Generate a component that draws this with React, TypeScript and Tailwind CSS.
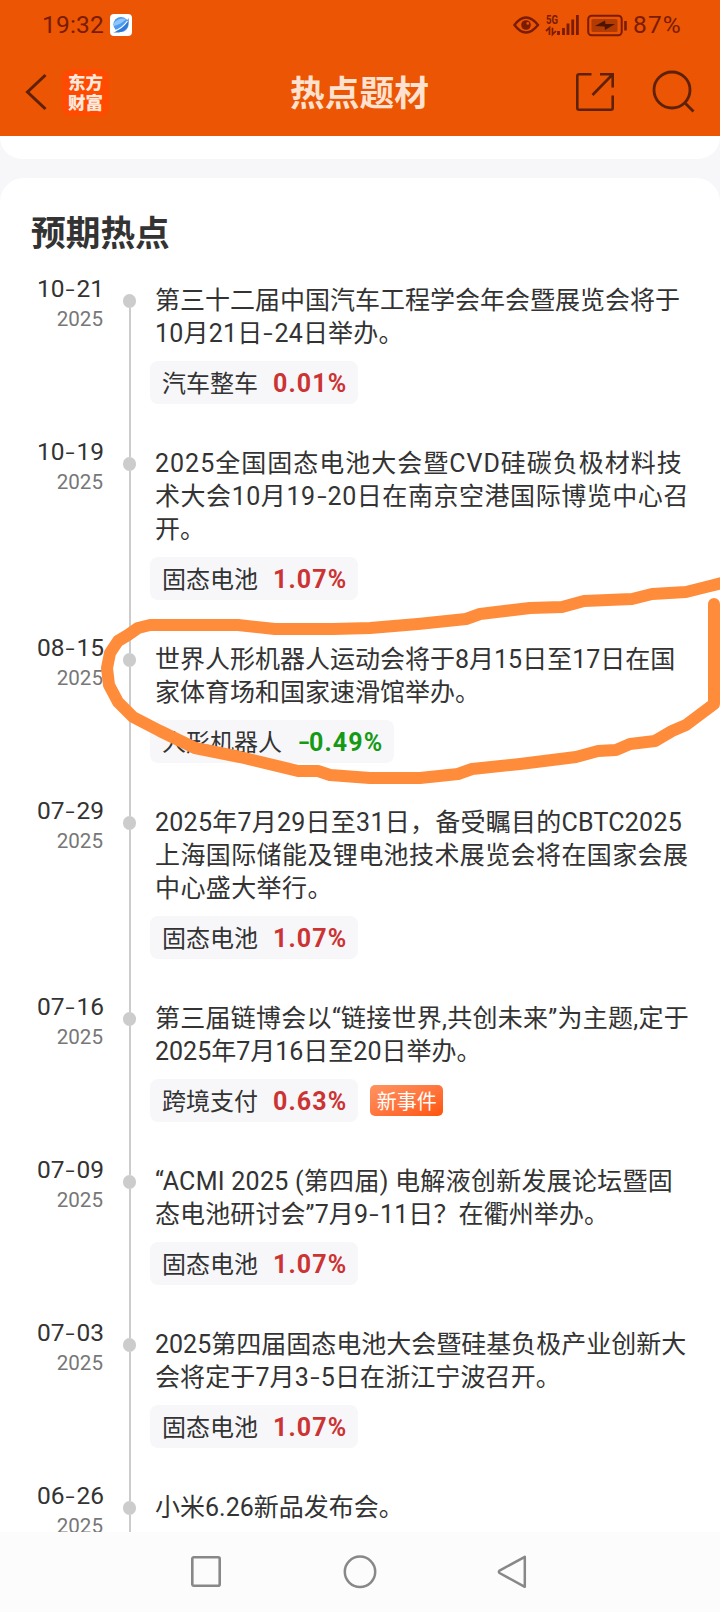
import React from "react";

type Line = { text: string; spacing?: string };
type Item = {
  date: string;
  year: string;
  lines: Line[];
  tag?: string;
  change?: string;
  fresh?: boolean;
};

const items: Item[] = [
  {
    date: "10-21",
    year: "2025",
    lines: [{ text: "第三十二届中国汽车工程学会年会暨展览会将于" }, { text: "10月21日-24日举办。", spacing: "tracking-[0.2px]" }],
    tag: "汽车整车",
    change: "0.01%",
  },
  {
    date: "10-19",
    year: "2025",
    lines: [
      { text: "2025全国固态电池大会暨CVD硅碳负极材料技", spacing: "tracking-[1px]" },
      { text: "术大会10月19-20日在南京空港国际博览中心召", spacing: "tracking-[0.55px]" },
      { text: "开。" },
    ],
    tag: "固态电池",
    change: "1.07%",
  },
  {
    date: "08-15",
    year: "2025",
    lines: [{ text: "世界人形机器人运动会将于8月15日至17日在国" }, { text: "家体育场和国家速滑馆举办。" }],
    tag: "人形机器人",
    change: "-0.49%",
  },
  {
    date: "07-29",
    year: "2025",
    lines: [
      { text: "2025年7月29日至31日，备受瞩目的CBTC2025", spacing: "tracking-[0.25px]" },
      { text: "上海国际储能及锂电池技术展览会将在国家会展", spacing: "tracking-[0.4px]" },
      { text: "中心盛大举行。", spacing: "tracking-[0.4px]" },
    ],
    tag: "固态电池",
    change: "1.07%",
  },
  {
    date: "07-16",
    year: "2025",
    lines: [
      { text: "第三届链博会以“链接世界,共创未来”为主题,定于", spacing: "tracking-[0.27px]" },
      { text: "2025年7月16日至20日举办。" },
    ],
    tag: "跨境支付",
    change: "0.63%",
    fresh: true,
  },
  {
    date: "07-09",
    year: "2025",
    lines: [
      { text: "“ACMI 2025 (第四届) 电解液创新发展论坛暨固", spacing: "tracking-[0.27px]" },
      { text: "态电池研讨会”7月9-11日？在衢州举办。", spacing: "tracking-[0.1px]" },
    ],
    tag: "固态电池",
    change: "1.07%",
  },
  {
    date: "07-03",
    year: "2025",
    lines: [{ text: "2025第四届固态电池大会暨硅基负极产业创新大" }, { text: "会将定于7月3-5日在浙江宁波召开。", spacing: "tracking-[0.1px]" }],
    tag: "固态电池",
    change: "1.07%",
  },
  { date: "06-26", year: "2025", lines: [{ text: "小米6.26新品发布会。" }] },
];

/** Text whose hyphens are drawn as wide dashes. */
function Dashed({ text }: { text: string }) {
  return (
    <>
      {text.split("-").map((part, i) => (
        <React.Fragment key={i}>
          {i > 0 && <span className="mx-[2px] inline-block w-[8px] scale-x-[1.35] scale-y-[0.85] text-center tracking-normal">-</span>}
          {part}
        </React.Fragment>
      ))}
    </>
  );
}

function StatusBar() {
  return (
    <div className="flex h-[50px] shrink-0 items-center pl-[42px] pr-[38px] text-[24.5px] leading-none text-[#7a1c02]">
      <span className="tracking-[0.2px]">19:32</span>
      <svg className="ml-[6px]" width="22" height="22" viewBox="0 0 22 22">
        <rect width="22" height="22" rx="4" fill="#fff" />
        <circle cx="11" cy="10.5" r="7.6" fill="#4c9bee" />
        <path d="M4 9Q9 3 16 5Q12 10 4 12Z" fill="#8ec6fb" />
        <path d="M3.5 18.5Q14 15.5 18.5 4Q20 16 9 18.5Z" fill="#2f78d8" />
        <path d="M3 17.5Q12 15 17.5 7" fill="none" stroke="#fff" strokeWidth="1.2" />
      </svg>
      <div className="grow" />
      <svg width="116" height="24" viewBox="0 0 116 24" fill="none">
        <path d="M1.5 12Q7 4.5 13 4.5T25 12Q19 19.5 13 19.5T1.5 12Z" stroke="#7a1c02" strokeWidth="2.4" />
        <circle cx="13" cy="12" r="4.8" fill="#7a1c02" />
        <circle cx="14.8" cy="10.4" r="1.3" fill="#eb5503" />
        <text x="33" y="10.5" fontSize="12" fontWeight="700" textLength="12" lengthAdjust="spacingAndGlyphs" fill="#7a1c02" fontFamily="Roboto, sans-serif">
          5G
        </text>
        <path d="M33 18L36.5 14.8V22M39.5 14.8V21.5L43 18" stroke="#7a1c02" strokeWidth="1.7" />
        <path d="M45.5 18V22M50.5 15V22M55 10.5V22M59.7 6.5V22M64.4 2V22" stroke="#7a1c02" strokeWidth="2.8" />
        <rect x="75.2" y="2.7" width="33.5" height="19.5" rx="3.5" stroke="#7a1c02" strokeWidth="2" />
        <rect x="78.5" y="6" width="26" height="13" rx="1.5" fill="#b23a03" />
        <path d="M82 13L92 7.5L92.5 11H102L92 17L91.5 13.5Z" fill="#4d1402" />
        <path d="M112.5 8V17.5" stroke="#7a1c02" strokeWidth="2.6" />
      </svg>
      <span className="ml-[4px] tracking-[1.2px]">87%</span>
    </div>
  );
}

function TitleBar() {
  return (
    <div className="flex h-[86px] shrink-0 items-center pb-[2px] pl-[24px] pr-[24px]">
      <svg width="24" height="38" viewBox="0 0 24 38" fill="none" stroke="#5f2106" strokeWidth="3">
        <path d="M21.5 2L3.5 19L21.5 36" />
      </svg>
      <div className="ml-[14px] flex size-[47px] flex-col items-center justify-center rounded-[9px] bg-[#ff4a02] pt-[2px] text-[17.5px] font-black leading-[20px] text-[#ffe9dc]">
        <span>东方</span>
        <span>财富</span>
      </div>
      <h1 className="grow pl-[35px] pt-[4px] text-center text-[34.7px] font-bold leading-none text-[#ffe1cf]">热点题材</h1>
      <svg width="40" height="40" viewBox="0 0 40 40" fill="none" stroke="#5f2106" strokeWidth="2.6">
        <path d="M16.5 2.3H4Q2.3 2.3 2.3 4V36Q2.3 37.7 4 37.7H36Q37.7 37.7 37.7 36V23.5" />
        <path d="M25 2.3H37.7V15.5M37 3L17.5 23" />
      </svg>
      <svg className="ml-[37px]" width="44" height="44" viewBox="0 0 44 44" fill="none" stroke="#5f2106" strokeWidth="2.8">
        <circle cx="20" cy="20" r="18" />
        <path d="M32.5 32.5L41.5 41.5" />
      </svg>
    </div>
  );
}

function TimelineItem({ item, first }: { item: Item; first: boolean }) {
  return (
    <li className="flex shrink-0">
      <div className="w-[104px] shrink-0 pt-[1px] text-right">
        <div className="text-[24.5px] leading-[30px] text-[#333]">
          <Dashed text={item.date} />
        </div>
        <div className="pr-[1px] text-[20.6px] leading-[30px] text-[#777]">{item.year}</div>
      </div>
      <div className="ml-[19px] flex w-[13px] shrink-0 flex-col items-center">
        <div className={first ? "h-[21px] w-[2px]" : "h-[21px] w-[2px] bg-[#ccc]"} />
        <div className="h-[14px] w-[13px] rounded-full bg-[#ccc]" />
        <div className="w-[2px] grow bg-[#ccc]" />
      </div>
      <div className="pb-[32px] pl-[14px] pt-[11px]">
        <div className="pl-[5px] text-[25px] leading-[33px] text-[#333]">
          {item.lines.map((line) => (
            <p key={line.text} className={`whitespace-pre ${line.spacing ?? ""}`}>
              <Dashed text={line.text} />
            </p>
          ))}
        </div>
        {item.tag && item.change && (
          <div className="mt-[11px] flex items-center">
            <div className="flex h-[43px] items-center rounded-[8px] bg-[#f7f7fa] pl-[12px] pr-[11px] pt-[2px] text-[24px] leading-none text-[#333]">
              <span>{item.tag}</span>
              <b
                className={
                  item.change.startsWith("-")
                    ? "ml-[15px] text-[25px] font-bold tracking-[1.1px] text-[#159a15]"
                    : "ml-[15px] text-[25px] font-bold tracking-[1.1px] text-[#cc3333]"
                }
              >
                <Dashed text={item.change} />
              </b>
            </div>
            {item.fresh && (
              <span className="ml-[12px] flex h-[31px] w-[73px] items-center justify-center rounded-[5px] bg-linear-to-br from-[#ff9460] to-[#ff5300] pt-[2px] text-[20px] leading-none text-white">
                新事件
              </span>
            )}
          </div>
        )}
      </div>
    </li>
  );
}

function Marker() {
  return (
    <svg className="pointer-events-none absolute left-0 top-0" width="720" height="1612" viewBox="0 0 720 1612" fill="none" stroke="#ff8c3a" strokeWidth="12" strokeLinejoin="round" strokeLinecap="round">
      <path d="M726 582L706 587L686 592L652 594L632 599L584 601L562 607L530 608L480 614L466 619L418 624L370 628L333 629H275L238 625H150L138 628L128 635L118 641L110 653L107 668L109 685L118 702L133 717L160 731L195 748L240 757L298 771L318 771L330 775L370 778H420L458 774L472 769L520 764L576 757L598 751L616 750L630 744L655 741L672 731L686 725L714 704V604" />
    </svg>
  );
}

function NavBar() {
  return (
    <nav className="flex h-[80px] shrink-0 items-center bg-[#fcfcfc] pl-[190px]">
      <svg width="32" height="34" viewBox="0 0 32 34" fill="none" stroke="#888" strokeWidth="2.6">
        <rect x="2.3" y="2.3" width="27.4" height="28.4" rx="1.5" />
      </svg>
      <svg className="ml-[121px]" width="34" height="34" viewBox="0 0 34 34" fill="none" stroke="#888" strokeWidth="2.5">
        <circle cx="17" cy="16.8" r="15.2" />
      </svg>
      <svg className="ml-[120px]" width="30" height="34" viewBox="0 0 30 34" fill="none" stroke="#888" strokeWidth="2.5" strokeLinejoin="round">
        <path d="M27.8 1.8V31.8L2.5 18Q1.2 16.8 2.5 15.6Z" />
      </svg>
    </nav>
  );
}

export default function App() {
  return (
    <div className="relative flex h-[1612px] w-[720px] flex-col overflow-hidden bg-[#f7f7fa] font-[Roboto,'Noto_Sans_CJK_SC',sans-serif]">
      <header className="flex shrink-0 flex-col bg-[#eb5503]">
        <StatusBar />
        <TitleBar />
      </header>
      <div className="h-[23px] shrink-0 rounded-b-[22px] bg-white" />
      <main className="mt-[19px] flex min-h-0 grow flex-col overflow-hidden rounded-t-[24px] bg-white">
        <h2 className="mt-[36px] h-[59px] shrink-0 pl-[31px] text-[34.7px] font-bold leading-[40px] text-[#333]">预期热点</h2>
        <ul className="flex flex-col">
          {items.map((item, i) => (
            <TimelineItem key={item.date} item={item} first={i === 0} />
          ))}
        </ul>
      </main>
      <NavBar />
      <Marker />
    </div>
  );
}
